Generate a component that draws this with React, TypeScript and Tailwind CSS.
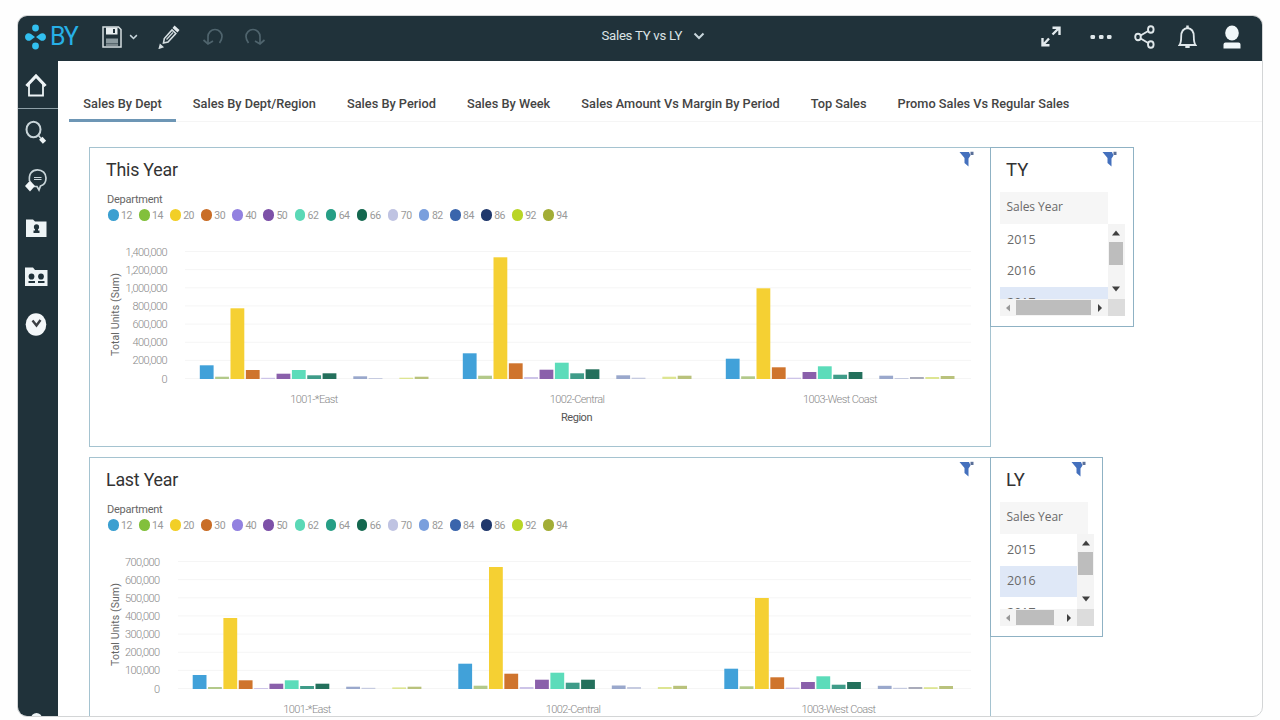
import React, { useState } from 'react';

const DEPARTMENTS = [
    { id: '12', color: '#3b9fd0', bar: '#41a1d9' },
    { id: '14', color: '#82c03c', bar: '#b3c98a' },
    { id: '20', color: '#f2cf27', bar: '#f5d033' },
    { id: '30', color: '#c96d26', bar: '#cf742d' },
    { id: '40', color: '#9281e0', bar: '#cdc4e8' },
    { id: '50', color: '#7d51a8', bar: '#8a60ab' },
    { id: '62', color: '#5bd8b6', bar: '#5cdcba' },
    { id: '64', color: '#269e85', bar: '#3f9c89' },
    { id: '66', color: '#14684f', bar: '#24705c' },
    { id: '70', color: '#bfc3e2', bar: '#d5d5ea' },
    { id: '82', color: '#7a9fdd', bar: '#9aa8cc' },
    { id: '84', color: '#3a65ac', bar: '#c6cbe0' },
    { id: '86', color: '#20386c', bar: '#a9abba' },
    { id: '92', color: '#b9d526', bar: '#dde592' },
    { id: '94', color: '#a2ad36', bar: '#b9c27c' },
];

interface Region {
    name: string;
    x: number;
    labelX: number;
    // bar heights, in the order of DEPARTMENTS
    bars: number[];
}

interface ChartData {
    title: string;
    ticks: string[];
    tickX: number;
    gridX: number;
    regions: Region[];
}

const THIS_YEAR: ChartData = {
    title: 'This Year',
    ticks: ['1,400,000', '1,200,000', '1,000,000', '800,000', '600,000', '400,000', '200,000', '0'],
    tickX: 77,
    gridX: 95,
    regions: [
        { name: '1001-*East', x: 109.8, labelX: 224, bars: [13.7, 2.3, 70.7, 9, 1.2, 5.3, 9, 3.7, 5.7, 0, 2.7, 1, 0, 1.3, 2.3] },
        { name: '1002-Central', x: 372.8, labelX: 487, bars: [25.7, 3.3, 121.7, 15.7, 2, 9.3, 16.3, 5.7, 9.7, 0, 3.7, 1.3, 0, 2.3, 3.3] },
        { name: '1003-West Coast', x: 635.8, labelX: 750, bars: [20.3, 2.7, 90.7, 11.7, 1.3, 7, 12.7, 4.3, 7, 0, 3.3, 1, 2, 2, 3] },
    ],
};

const LAST_YEAR: ChartData = {
    title: 'Last Year',
    ticks: ['700,000', '600,000', '500,000', '400,000', '300,000', '200,000', '100,000', '0'],
    tickX: 69.5,
    gridX: 88,
    regions: [
        { name: '1001-*East', x: 102.7, labelX: 217, bars: [14, 2, 71, 8.7, 1, 5.3, 8.7, 3, 5.3, 0, 2.3, 1.2, 0, 1.6, 2.3] },
        { name: '1002-Central', x: 368.3, labelX: 483, bars: [25.3, 3.3, 122, 15.3, 2, 9.3, 16.3, 6.3, 9.3, 0, 3.5, 2, 0, 2, 3.2] },
        { name: '1003-West Coast', x: 634.3, labelX: 748.5, bars: [20.3, 2.7, 91, 11.7, 1.4, 7, 12.7, 4.3, 7, 0, 3.2, 1.2, 2, 1.8, 3] },
    ],
};

const TABS = [
    'Sales By Dept',
    'Sales By Dept/Region',
    'Sales By Period',
    'Sales By Week',
    'Sales Amount Vs Margin By Period',
    'Top Sales',
    'Promo Sales Vs Regular Sales',
];

const Logo: React.FC = () => (
    <div className="flex items-center gap-[3px]">
        <svg width="23" height="26" viewBox="0 0 23 26" fill="#32c0f0">
            <circle cx="11.5" cy="4" r="3.4" />
            <circle cx="11.5" cy="22" r="3.4" />
            <path d="M1 13a3.7 3.7 0 0 1 6-3L11 13l-4 3A3.7 3.7 0 0 1 1 13z" />
            <path d="M22 13a3.7 3.7 0 0 0-6-3L12 13l4 3A3.7 3.7 0 0 0 22 13z" />
        </svg>
        <span className="text-[25px] leading-none tracking-[-1.2px] text-[#27b0e6]">BY</span>
    </div>
);

const Chevron: React.FC<{ small?: boolean }> = ({ small }) => (
    <svg width={small ? 9 : 12} height={small ? 6 : 8} viewBox="0 0 12 8" fill="none" stroke="#c8d6dc" strokeWidth="2">
        <path d="M1.5 1.5L6 6l4.5-4.5" />
    </svg>
);

const SaveIcon: React.FC = () => (
    <svg width="20" height="22" viewBox="0 0 20 22" fill="none" stroke="#d5dee1" strokeWidth="1.5">
        <path d="M1 1h15.5l2.5 2.5V21H1z" />
        <path d="M4 1.5h11.5v7H4z" fill="#e8eef0" stroke="none" />
        <path d="M12 3v4" stroke="#20323a" strokeWidth="2" />
        <path d="M4 12.5h12v5H4z" fill="#8b9a9f" stroke="none" />
        <path d="M4 19h12" strokeWidth="1" />
    </svg>
);

const PencilIcon: React.FC = () => (
    <svg width="22" height="24" viewBox="0 0 22 24" fill="none" stroke="#d5dee1" strokeWidth="1.6">
        <path d="M5.5 18l.8-4.5L14 5l3.8 3.5L10 17z" />
        <path d="M8.5 14.5L15 7.5" strokeWidth="1.2" />
        <path d="M14.5 3l2-2.5 5 4.500-2 2.500z" fill="#e3eaed" stroke="none" />
        <path d="M1.5 23l.8-3L4.500 22z" fill="#e3eaed" />
    </svg>
);

const UndoIcon: React.FC<{ flip?: boolean }> = ({ flip }) => (
    <svg width="22" height="20" viewBox="0 0 22 20" fill="none" stroke="#4f646d" strokeWidth="1.7" className={flip ? '-scale-x-100' : ''}>
        <path d="M6 16V9.500a7 7 0 0 1 14 0c0 2.500-1 4.500-2.500 6.500" />
        <path d="M1.5 13l4.5 4 5-3" />
    </svg>
);

const ExpandIcon: React.FC = () => (
    <svg width="20" height="21" viewBox="0 0 20 21" fill="none" stroke="#e3eaed" strokeWidth="2.4">
        <path d="M11.5 1.7h7V9M18 2l-6.500 6.500" />
        <path d="M8.5 19.3h-7V12M2 19l6-6.500" />
    </svg>
);

const DotsIcon: React.FC = () => (
    <svg width="22" height="6" viewBox="0 0 22 6" fill="#dfe7ea">
        <rect x="0.5" y="1" width="4.5" height="4" rx="1.3" />
        <rect x="9" y="1" width="4.5" height="4" rx="1.3" />
        <rect x="17" y="1" width="4.5" height="4" rx="1.3" />
    </svg>
);

const ShareIcon: React.FC = () => (
    <svg width="21" height="24" viewBox="0 0 21 24" fill="none" stroke="#dfe7ea" strokeWidth="1.9">
        <ellipse cx="4" cy="12" rx="2.8" ry="3.3" />
        <ellipse cx="16.8" cy="4.5" rx="2.8" ry="3.3" />
        <ellipse cx="16.8" cy="19.5" rx="2.8" ry="3.3" />
        <path d="M6.600 10.500l7.600-4.500M6.600 13.500l7.600 4.500" />
    </svg>
);

const BellIcon: React.FC = () => (
    <svg width="19" height="24" viewBox="0 0 19 24" fill="none" stroke="#dfe7ea" strokeWidth="1.8">
        <path d="M1.500 20h16c-1.500-2-1.700-4-1.700-8.500 0-5-2.300-8-6.300-8.500-4 .5-6.300 3.500-6.300 8.500 0 4.500-.2 6.500-1.700 8.500z" />
        <path d="M9.5 3V.5" strokeWidth="2.5" />
        <path d="M7.300 20.500h4.400v2.500H7.300z" fill="#dfe7ea" stroke="none" />
    </svg>
);

const UserIcon: React.FC = () => (
    <svg width="18" height="24" viewBox="0 0 18 24" fill="#f1f7f9">
        <ellipse cx="9" cy="8" rx="6.8" ry="7.5" />
        <path d="M0.500 23.500v-4a2 2 0 0 1 2-2h13a2 2 0 0 1 2 2v4z" />
    </svg>
);

const HomeIcon: React.FC = () => (
    <svg width="22" height="24" viewBox="0 0 22 24" fill="none" stroke="#eef4f6">
        <path d="M4 11v11.500h14V11" strokeWidth="1.8" />
        <path d="M1.5 13L11 3l9.5 10" strokeWidth="3.2" />
    </svg>
);

const SearchIcon: React.FC = () => (
    <svg width="22" height="24" viewBox="0 0 22 24" fill="none" stroke="#c9d5d9">
        <ellipse cx="8.5" cy="9.5" rx="7" ry="7.8" strokeWidth="2" />
        <path d="M13.5 15.5l2.5 3" strokeWidth="1.5" />
        <path d="M15.8 18.300l3.700 4" stroke="#eef4f6" strokeWidth="4.5" />
    </svg>
);

const AssistantIcon: React.FC = () => (
    <svg width="22" height="24" viewBox="0 0 22 24" fill="none" stroke="#c9d5d9" strokeWidth="1.7">
        <path d="M4.500 13C3.500 6 7 1.800 12.500 1.800c5 0 8.500 3.700 8.500 8.200 0 4.200-2.500 7-5.500 8l-1.500 4-2-3.500H9" />
        <path d="M9 9.500h7.500M9 11.500h7.500" strokeWidth="1.1" />
        <path d="M5 12.500l5 5.500-5 5.500L0 18z" fill="#f1f7f9" stroke="none" />
    </svg>
);

const FolderIcon: React.FC = () => (
    <svg width="22" height="18" viewBox="0 0 22 18" fill="#eef4f6">
        <path d="M1 0.500h7l2 2h11.500V18H1z" />
        <ellipse cx="11.5" cy="8" rx="2.6" ry="2.8" fill="#20323a" />
        <path d="M10 10h3v1.500h1.500V14h-6v-2.500H10z" fill="#20323a" />
    </svg>
);

const TeamIcon: React.FC = () => (
    <svg width="24" height="19" viewBox="0 0 24 19" fill="#eef4f6">
        <path d="M1 0.500h8l2 2.500h12.500v16H1z" />
        <g fill="#20323a">
            <ellipse cx="7.5" cy="9.5" rx="2.9" ry="3.1" />
            <path d="M4.500 14h6.500v2H4.500z" />
            <ellipse cx="17" cy="9.5" rx="2.9" ry="3.1" />
            <path d="M14 14h6.500v2H14z" />
        </g>
    </svg>
);

const RecentIcon: React.FC = () => (
    <svg width="22" height="23" viewBox="0 0 22 23">
        <ellipse cx="11" cy="11.5" rx="10.3" ry="11.2" fill="#f4f8fa" />
        <path d="M7.500 7.500l4 5 4-5.500" fill="none" stroke="#3c4045" strokeWidth="2.4" />
    </svg>
);

const FilterIcon: React.FC = () => (
    <svg width="16" height="16" viewBox="0 0 16 16">
        <path d="M0.500 1h9.500l1.500 3.500L9.500 7.500V15.500L5.500 12V7z" fill="#4470bd" />
        <path d="M11.500 0.800h3v3.200h-3z" fill="#5a6f98" />
    </svg>
);

const Arrow: React.FC<{ d: string; color?: string }> = ({ d, color = '#3f3f3f' }) => (
    <svg width="8" height="8" viewBox="0 0 8 8" fill={color}>
        <path d={d} />
    </svg>
);

const ChartPanel: React.FC<{ data: ChartData }> = ({ data }) => (
    <section className="relative h-[300px] w-[902px] shrink-0 border border-[#a5c3d0] bg-white">
        <div className="absolute right-[15px] top-[3px]"><FilterIcon /></div>
        <h2 className="pl-[16px] pt-[10px] text-[17.8px] leading-[24px] tracking-[-0.2px] text-[#333]">{data.title}</h2>
        <div className="pl-[17px] pt-[10px] text-[11px] leading-[15px] tracking-[-0.25px] text-[#666]">Department</div>
        <div className="flex pl-[18px]">
            {DEPARTMENTS.map(dept => (
                <div key={dept.id} className="flex h-[16px] w-[31.1px] items-center gap-[2.5px]">
                    <span className="h-[12px] w-[10.5px] rounded-full" style={{ backgroundColor: dept.color }} />
                    <span className="pt-px text-[10.5px] leading-[15px] tracking-[-0.5px] text-[#999]">{dept.id}</span>
                </div>
            ))}
        </div>
        <svg width="898" height="206" viewBox="0 0 898 206" className="block font-[Roboto]">
            {data.ticks.map((tick, i) => (
                <g key={tick}>
                    <line x1={data.gridX} x2="881" y1={28.5 + i * 18.15} y2={28.5 + i * 18.15} stroke="#f5f5f5" />
                    <text x={data.tickX} y={32.5 + i * 18.15} textAnchor="end" fontSize="11" fontWeight="300" letterSpacing="-0.6" fill="#888">{tick}</text>
                </g>
            ))}
            <text transform="translate(29 91.5) rotate(-90)" textAnchor="middle" fontSize="10.5" letterSpacing="0.1" fill="#666">Total Units (Sum)</text>
            {data.regions.map(region => (
                <g key={region.name}>
                    {region.bars.map((h, i) => (
                        <rect key={i} x={region.x + i * 15.35} y={156 - h} width="13.8" height={h} fill={DEPARTMENTS[i].bar} />
                    ))}
                    <text x={region.labelX} y="179.5" textAnchor="middle" fontSize="11" fontWeight="300" letterSpacing="-0.6" fill="#888">{region.name}</text>
                </g>
            ))}
            <text x="486.5" y="198" textAnchor="middle" fontSize="11" letterSpacing="-0.45" fill="#555">Region</text>
        </svg>
    </section>
);

interface YearListProps {
    title: string;
    panelClass: string;
    headerClass: string;
    listClass: string;
    thumbClass: string;
    selected: string;
}

const YearList: React.FC<YearListProps> = ({ title, panelClass, headerClass, listClass, thumbClass, selected }) => {
    const [year, setYear] = useState(selected);

    return (
        <section className={`relative -ml-px h-[180px] shrink-0 border border-[#8fb2c4] bg-white ${panelClass}`}>
            <div className="absolute right-[15px] top-[3px]"><FilterIcon /></div>
            <h2 className="pl-[15px] pt-[10px] text-[18.5px] leading-[24px] text-[#333]">{title}</h2>
            <div className={`ml-[9px] mt-[10px] h-[32px] bg-[#f6f6f6] pl-[6.5px] font-['Open_Sans'] text-[12px] leading-[30px] tracking-[-0.05px] text-[#6a6a6a] ${headerClass}`}>Sales Year</div>
            <div className="ml-[9px] flex h-[75px]">
                <div className={`overflow-hidden ${listClass}`}>
                    {['2015', '2016', '2017'].map(y => (
                        <button
                            key={y}
                            onClick={() => setYear(y)}
                            className={`block h-[31.5px] w-full pl-[7px] text-left font-['Open_Sans'] text-[12.5px] leading-[28px] text-[#6a6a6a] ${year === y ? 'bg-[#dfe8f7]' : 'bg-white'}`}
                        >
                            {y}
                        </button>
                    ))}
                </div>
                <div className="flex w-[17px] flex-col items-center bg-[#f4f4f4] pb-[6px] pt-[5px]">
                    <Arrow d="M0 6.500h8L4 1.500z" />
                    <div className="mt-[5px] h-[23px] w-[14.5px] bg-[#bdbdbd]" />
                    <div className="mt-auto"><Arrow d="M0 1.500h8L4 6.500z" /></div>
                </div>
            </div>
            <div className="ml-[9px] flex h-[17px]">
                <div className={`flex items-center bg-[#f4f4f4] px-[4px] ${listClass}`}>
                    <Arrow d="M6 0.500v7L2 4z" color="#999" />
                    <div className={`ml-[4px] h-[15px] bg-[#bdbdbd] ${thumbClass}`} />
                    <div className="ml-auto"><Arrow d="M2 0v8l4-4z" /></div>
                </div>
                <div className="w-[17px] bg-[#dcdcdc]" />
            </div>
        </section>
    );
};

const App: React.FC = () => {
    const [activeTab, setActiveTab] = useState(TABS[0]);

    return (
        <div className="h-[720px] w-[1280px] overflow-hidden bg-[#fefefe] pl-[17px] pt-[15px] font-[Roboto,sans-serif]">
            <div className="flex h-[702px] w-[1246px] flex-col overflow-hidden rounded-[10px] border border-[#d3d5d6] bg-white">
                {/* Toolbar */}
                <header className="grid h-[45px] shrink-0 grid-cols-[1fr_auto_1fr] items-center bg-[#20323a] pb-[4px]">
                    <div className="flex items-center pl-[6px]">
                        <div className="w-[78px]"><Logo /></div>
                        <SaveIcon />
                        <div className="w-[36px] pl-[7px]"><Chevron small /></div>
                        <PencilIcon />
                        <div className="flex gap-[20px] pl-[22px]">
                            <UndoIcon />
                            <UndoIcon flip />
                        </div>
                    </div>
                    <button className="-mr-[26px] flex items-center gap-[10.5px] pb-px text-[13.2px] leading-none tracking-[-0.25px] text-[#dbe3e6]">
                        Sales TY vs LY
                        <Chevron />
                    </button>
                    <div className="flex items-center justify-end pr-[21px]">
                        <ExpandIcon />
                        <div className="pl-[29px]"><DotsIcon /></div>
                        <div className="pl-[22px]"><ShareIcon /></div>
                        <div className="pl-[23px]"><BellIcon /></div>
                        <div className="pl-[26px]"><UserIcon /></div>
                    </div>
                </header>

                <div className="flex min-h-0 flex-1">
                    {/* Navigation rail */}
                    <nav className="flex w-[40px] shrink-0 flex-col items-center overflow-hidden bg-[#20323a] pr-[4px]">
                        <div className="-mr-[4px] flex h-[48px] w-[40px] shrink-0 items-center justify-center border-b border-[#8fa0a7] pr-[4px]"><HomeIcon /></div>
                        <div className="-mt-px flex h-[48px] shrink-0 items-center"><SearchIcon /></div>
                        <div className="flex h-[48px] shrink-0 items-center"><AssistantIcon /></div>
                        <div className="flex h-[48px] shrink-0 items-center"><FolderIcon /></div>
                        <div className="flex h-[48px] shrink-0 items-center"><TeamIcon /></div>
                        <div className="flex h-[48px] shrink-0 items-center"><RecentIcon /></div>
                        <div className="-mb-[9px] mt-auto h-[12px] w-[11px] shrink-0 rounded-full bg-[#eef4f6]" />
                    </nav>

                    <main className="min-w-0 flex-1 pl-[11px]">
                        <div className="flex h-[61px] items-end gap-[2.5px] border-b border-[#f5f5f5]">
                            {TABS.map(tab => (
                                <button
                                    key={tab}
                                    onClick={() => setActiveTab(tab)}
                                    className={`-mb-px whitespace-nowrap border-b-[3px] px-[14.3px] pb-[7px] text-[12.76px] font-medium leading-[16px] text-[#444] ${tab === activeTab ? 'border-[#6d96b5]' : 'border-transparent'}`}
                                >
                                    {tab}
                                </button>
                            ))}
                        </div>
                        <div className="flex flex-col gap-[10px] pl-[20px] pt-[25px]">
                            <div className="flex items-start">
                                <ChartPanel data={THIS_YEAR} />
                                <YearList title="TY" panelClass="w-[144px]" headerClass="w-[107.5px]" listClass="w-[107.5px]" thumbClass="w-[75px]" selected="2017" />
                            </div>
                            <div className="flex items-start">
                                <ChartPanel data={LAST_YEAR} />
                                <YearList title="LY" panelClass="w-[113px]" headerClass="w-[88px]" listClass="w-[77px]" thumbClass="w-[38px]" selected="2016" />
                            </div>
                        </div>
                    </main>
                </div>
            </div>
        </div>
    );
};

export default App;
